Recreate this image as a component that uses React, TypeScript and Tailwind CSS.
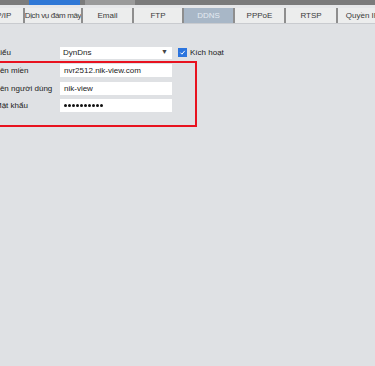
import React from "react";

const tabs = [
  { label: "TCP/IP", w: 51 },
  { label: "Dịch vụ đám mây", w: 58, tight: true },
  { label: "Email", w: 51 },
  { label: "FTP", w: 50 },
  { label: "DDNS", w: 51, active: true },
  { label: "PPPoE", w: 51 },
  { label: "RTSP", w: 52 },
  { label: "Quyền IP", w: 51 },
];

function Field({ children }: { children: React.ReactNode }) {
  return (
    <div className="w-[112px] h-[13px] bg-white flex items-center pl-[4px] text-[8px] text-[#222] leading-none">
      {children}
    </div>
  );
}

export default function App() {
  return (
    <div
      className="w-[375px] h-[366px] bg-[#dfe1e4] overflow-hidden relative"
      style={{ fontFamily: '"Liberation Sans", Arial, sans-serif' }}
    >
      {/* top strip */}
      <div className="h-[5px] bg-[#7b7b7b] flex">
        <div className="ml-[29px] w-[51px] h-full bg-[#2f78d6]" />
        <div className="ml-[5px] w-[50px] h-full bg-[#9a9a9a]" />
      </div>
      <div className="h-[3px] bg-[#e6e7e9]" />
      {/* tabs */}
      <div className="flex h-[16px] -ml-[27px] border-b border-[#c9cbcf]">
        {tabs.map((t) => (
          <div
            key={t.label}
            style={{ width: t.w }}
            className={
              "shrink-0 h-full flex items-center justify-center text-[8px] whitespace-nowrap border-x border-[#8e8e8e] overflow-hidden " +
              (t.tight ? "tracking-[-0.35px] " : "") +
              (t.active
                ? "bg-[#a8b7c7] text-[#e4ebf2]"
                : "bg-[#eceded] text-[#3a3a3a]")
            }
          >
            {t.label}
          </div>
        ))}
      </div>

      {/* form */}
      <div className="mt-[22px] -ml-[5px] flex flex-col text-[8px] text-[#222]">
        <div className="flex items-center h-[13px]">
          <div className="w-[65px]">Kiểu</div>
          <div className="w-[112px] h-[12px] bg-white flex items-center justify-between pl-[3px] pr-[4px]">
            <span>DynDns</span>
            <span className="text-[7px] text-[#444]">▼</span>
          </div>
          <div className="ml-[6px] w-[9px] h-[9px] bg-[#2b74de] flex items-center justify-center">
            <svg width="7" height="7" viewBox="0 0 10 10">
              <path d="M2 5.2 L4.2 7.4 L8.2 2.6" stroke="white" strokeWidth="1.4" fill="none" />
            </svg>
          </div>
          <span className="ml-[3px]">Kích hoạt</span>
        </div>

        <div className="mt-[2px] -ml-[6px] w-[208px] border-2 border-[#e8121f] pt-[1px] pb-[13px] flex flex-col gap-[4px]">
          <div className="flex items-center h-[13px]">
            <div className="w-[69px] pl-[4px]">Tên miền</div>
            <Field>nvr2512.nik-view.com</Field>
          </div>
          <div className="flex items-center h-[13px] mt-[1px]">
            <div className="w-[69px] pl-[4px]">Tên người dùng</div>
            <Field>nik-view</Field>
          </div>
          <div className="flex items-center h-[13px]">
            <div className="w-[69px] pl-[4px]">Mật khẩu</div>
            <Field>
              <div className="flex gap-[1px]">
                {Array.from({ length: 10 }).map((_, i) => (
                  <span key={i} className="w-[3px] h-[3px] rounded-full bg-[#111]" />
                ))}
              </div>
            </Field>
          </div>
        </div>
      </div>
    </div>
  );
}
